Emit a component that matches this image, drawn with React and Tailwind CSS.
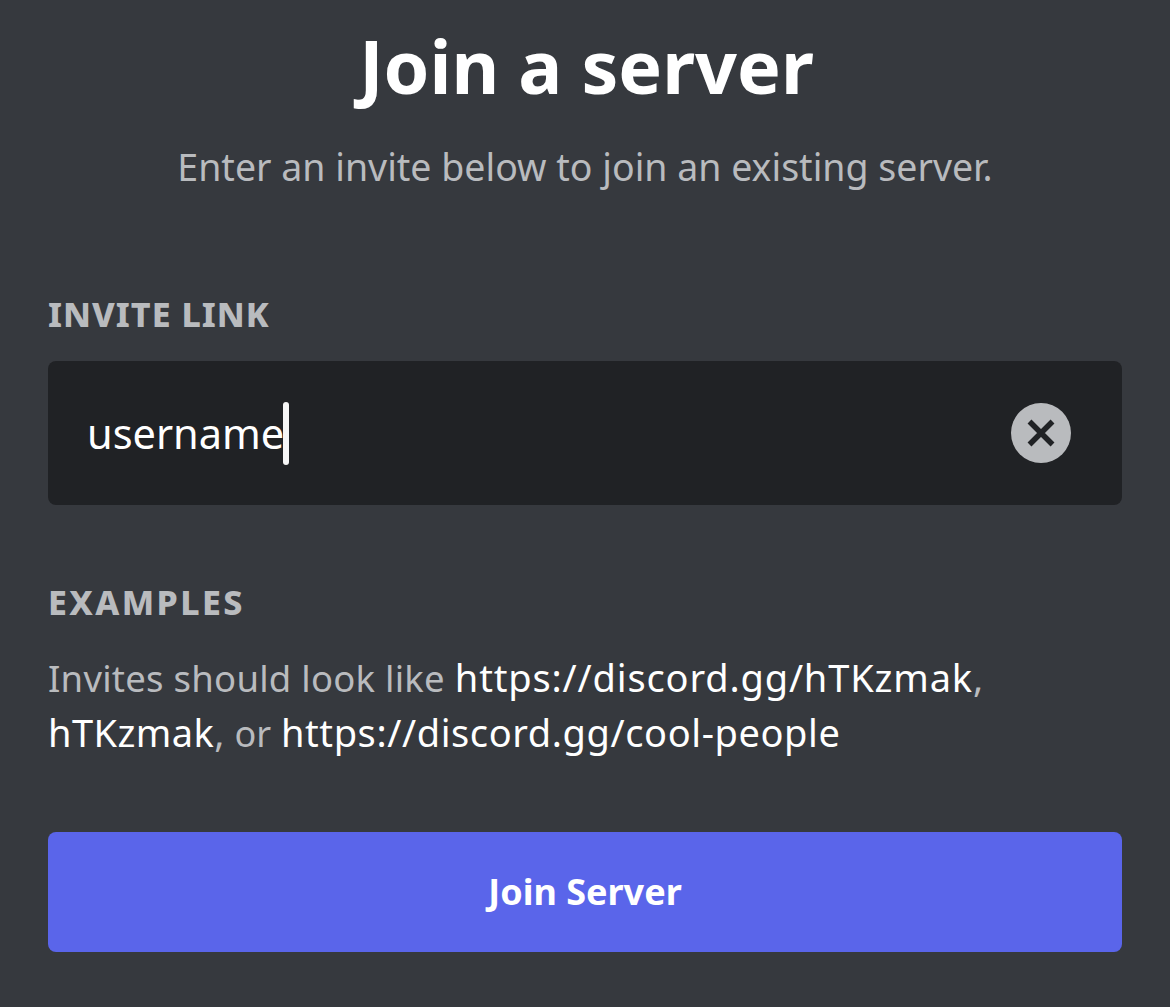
const FONT = "font-['Noto_Sans','Open_Sans',sans-serif]";

function ClearIcon() {
  return (
    <div className="flex h-[60px] w-[60px] items-center justify-center rounded-full bg-[#b9bbbe]">
      <svg viewBox="0 0 30 30" className="h-[30px] w-[30px]" fill="none" stroke="#202225" strokeWidth="5.5">
        <path d="M3.5 3.5l23 23M26.5 3.5l-23 23" />
      </svg>
    </div>
  );
}

export default function App() {
  return (
    <div className={`h-[1007px] w-[1170px] overflow-hidden bg-[#36393e] px-12 pt-[21px] ${FONT}`}>
      <h1 className="pl-[3px] text-center text-[73.5px] leading-[90px] font-bold text-white">Join a server</h1>
      <p className="mt-[31px] text-center text-[37.5px] leading-[50px] text-[#b9bbbe]">
        Enter an invite below to join an existing server.
      </p>

      <h2 className="mt-[100px] text-[34px] leading-[44px] font-extrabold tracking-[1px] text-[#b9bbbe]">INVITE LINK</h2>
      <div className="mt-[25px] flex h-[144px] items-center justify-between rounded-lg bg-[#202225] pr-[51px] pl-[39px]">
        <div className="flex items-center">
          <span className="text-[41.5px] leading-[56px] text-white">username</span>
          <span className="-ml-[1px] h-[63px] w-[6px] rounded-full bg-[#f6f6f6]" />
        </div>
        <ClearIcon />
      </div>

      <h2 className="mt-[75px] text-[34px] leading-[44px] font-extrabold tracking-[2.4px] text-[#b9bbbe]">EXAMPLES</h2>
      <div className="mt-[26px] text-[38px] text-[#b9bbbe]">
        <p className="h-[55px] leading-[55px]">
          <span className="text-[36.5px] tracking-[0.24px]">Invites should look like</span>{" "}
          <span className="tracking-[0.85px] text-white">https://discord.gg/hTKzmak</span>,
        </p>
        <p className="h-[55px] leading-[55px]">
          <span className="tracking-[0.45px] text-white">hTKzmak</span>, <span className="text-[36px]">or</span>{" "}
          <span className="tracking-[0.6px] text-white">https://discord.gg/cool-people</span>
        </p>
      </div>

      <button className="mt-[72px] flex h-[120px] w-full items-center justify-center rounded-lg bg-[#5a65ea] text-[36px] font-bold text-white">
        Join Server
      </button>
    </div>
  );
}
